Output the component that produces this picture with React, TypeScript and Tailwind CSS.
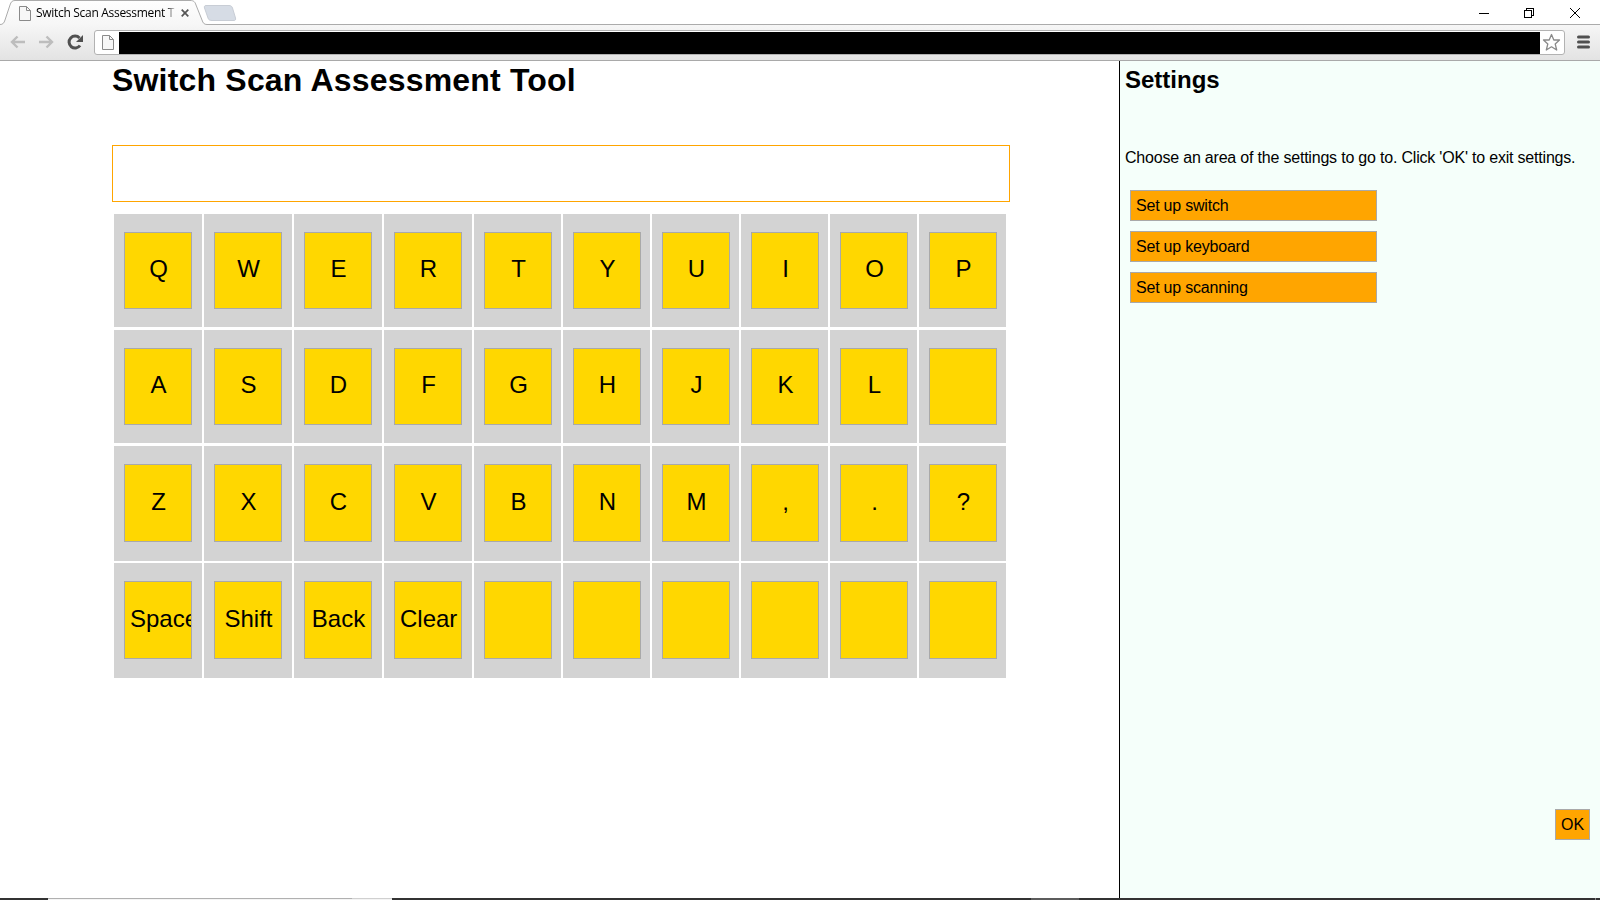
const rows = [
  ["Q", "W", "E", "R", "T", "Y", "U", "I", "O", "P"],
  ["A", "S", "D", "F", "G", "H", "J", "K", "L", ""],
  ["Z", "X", "C", "V", "B", "N", "M", ",", ".", "?"],
  ["Space", "Shift", "Back", "Clear", "", "", "", "", "", ""],
];
const rowStyles = ["h-[113px] mb-[3px]", "h-[113px] mb-[3px]", "h-[115px] mb-[2px]", "h-[115px]"];
const keyHeights = ["h-[77px]", "h-[77px]", "h-[78px]", "h-[78px]"];

function PageIcon() {
  return (
    <svg width="12" height="15" viewBox="0 0 12 15" fill="#f7f7f7" stroke="#8a8a8a">
      <path d="M.5 .5H7.5L11.5 4.5V14.5H.5Z" />
      <path d="M7.5 .5V4.5H11.5" fill="none" />
    </svg>
  );
}

function Browser() {
  return (
    <header className="h-[61px] shrink-0 border-b border-[#a9a9a9] bg-white">
      <div className="relative h-6">
        <svg className="absolute left-0 top-0" width="1600" height="26" fill="none">
          <defs>
            <linearGradient id="tab" x1="0" y1="0" x2="0" y2="1">
              <stop offset="0" stopColor="#fefefe" />
              <stop offset="1" stopColor="#f6f6f6" />
            </linearGradient>
          </defs>
          <path d="M206 5.5H229C231 5.5 232 6.500 232.500 8L235.500 18C236 20 235 20.500 234 20.500H212C210 20.500 208.500 20 208 18L204.500 8C204 6.500 204.500 5.500 206 5.500Z" fill="#d6dce5" stroke="#c8cdd5" />
          <path d="M0 24.500C3 24.500 4 23 5 20L10 5C11 2 12 .5 15 .5H190C194 .5 195 2 196 5L202 20C203 23 204 24.500 207 24.500H1600V26H0Z" fill="url(#tab)" />
          <path d="M0 24.500C3 24.500 4 23 5 20L10 5C11 2 12 .5 15 .5H190C194 .5 195 2 196 5L202 20C203 23 204 24.500 207 24.500H1600" stroke="#ababab" />
        </svg>
        <div className="relative flex h-6 items-center pl-[19px]">
          <div className="pt-[2px]"><PageIcon /></div>
          <div className="ml-[5px] w-[142px] whitespace-nowrap bg-gradient-to-r from-black from-[91%] to-transparent to-[99%] bg-clip-text pt-[2px] font-['Open_Sans','Noto_Sans',sans-serif] text-[12px] leading-[20px] tracking-[-0.3px] text-transparent">
            Switch Scan Assessment T
          </div>
          <svg className="ml-[3px] mt-[2px]" width="8" height="8" stroke="#555" strokeWidth="1.700"><path d="M.7 .7L7.300 7.300M7.300 .7L.7 7.300" /></svg>
          <svg className="ml-auto mr-[12px] mt-[2px] overflow-visible" width="106" height="12" fill="none" stroke="#000" shapeRendering="crispEdges">
            <path d="M-3 6.500H7" />
            <path d="M42.500 3.500H49.500V10.500H42.500ZM44.500 3.500V1.500H51.500V8.500H49.500" />
            <path d="M88 1L98 11M98 1L88 11" shapeRendering="auto" />
          </svg>
        </div>
      </div>
      <div className="relative mt-px flex h-[35px] items-center bg-gradient-to-b from-[#f6f6f6] to-[#e3e3e3] pl-[10px]">
        <svg className="mb-px" width="74" height="18" fill="none" stroke="#bdbdbd" strokeWidth="2.400">
          <path d="M15 9H2M7.500 3.500L2 9L7.500 14.500" />
          <path d="M29 9H42M36.500 3.500L42 9L36.500 14.500" />
          <path d="M70 12.500A6 6 0 1 1 69.500 5" stroke="#505050" strokeWidth="3" />
          <path d="M73 2V9H66Z" fill="#505050" stroke="none" />
        </svg>
        <div className="ml-[10px] flex h-[25px] w-[1471px] items-center rounded-[3px] border border-[#b2b2b2] bg-white pl-[7px]">
          <PageIcon />
          <div className="ml-[5px] h-[22px] w-[1421px] bg-black" />
          <svg className="ml-[2px]" width="19" height="19" viewBox="0 0 19 19" fill="none" stroke="#8a8a8a" strokeWidth="1.300" strokeLinejoin="round">
            <path d="M9.500 1.500L11.800 7H17.500L13.200 11L14.700 17L9.500 13.800L4.300 17L5.800 11L1.500 7H7.200Z" />
          </svg>
        </div>
        <svg className="mb-px ml-[12px]" width="13" height="14" stroke="#505050" strokeWidth="3" strokeLinecap="round"><path d="M1.500 2H11.500M1.500 7H11.500M1.500 12H11.500" /></svg>
      </div>
    </header>
  );
}

export default function App() {
  return (
    <div className="flex h-[900px] w-[1600px] flex-col overflow-hidden bg-white font-['Liberation_Sans',Arial,sans-serif] text-black">
      <Browser />
      <div className="flex min-h-0 flex-1">
        <main className="w-[1119px] pl-[112px]">
          <h1 className="h-[84px] pt-px text-[32px] font-bold leading-[37px] tracking-[0.19px]">Switch Scan Assessment Tool</h1>
          <div className="h-[57px] w-[898px] border border-[#ffa500]" />
          <div className="pl-[2px] pt-[12px]">
            {rows.map((row, r) => (
              <div key={r} className={`flex gap-[2px] ${rowStyles[r]}`}>
                {row.map((label, c) => (
                  <div key={c} className={`h-full bg-[#d3d3d3] pl-[10px] pt-[18px] ${c < 4 ? "w-[88px]" : "w-[87px]"}`}>
                    <button className={`block w-[68px] overflow-hidden whitespace-nowrap border border-[#a9a9a9] bg-[#ffd700] pb-[4px] pl-[5px] pr-[4px] text-center text-[24px] leading-[71px] ${keyHeights[r]}`}>
                      {label}
                    </button>
                  </div>
                ))}
              </div>
            ))}
          </div>
        </main>
        <aside className="flex flex-1 flex-col border-l border-black bg-[#f5fffa] pl-[5px]">
          <h2 className="h-[87px] pt-[5px] text-[24px] font-bold leading-[28px]">Settings</h2>
          <p className="whitespace-nowrap text-[16px] leading-[20px] tracking-[-0.2px]">Choose an area of the settings to go to. Click 'OK' to exit settings.</p>
          <div className="flex flex-col gap-[10px] pl-[5px] pt-[22px]">
            {["Set up switch", "Set up keyboard", "Set up scanning"].map((s) => (
              <button key={s} className="h-[31px] w-[247px] border border-[#a9a9a9] bg-[#ffa500] pl-[5px] text-left text-[16px] leading-[29px] tracking-[-0.21px]">{s}</button>
            ))}
          </div>
          <button className="mb-[58px] mr-[10px] mt-auto h-[31px] w-[35px] self-end border border-[#a9a9a9] bg-[#ffa500] text-[16px] leading-[29px]">OK</button>
        </aside>
      </div>
      <footer className="flex h-[2px] shrink-0 bg-[#333]">
        <div className="ml-[48px] h-[2px] w-[304px] border-t border-[#b0b0b0] bg-[#f4f4f4]" />
        <div className="h-[2px] w-[40px] border-t border-[#d0d0d0] bg-[#f4f4f4]" />
        <div className="ml-[639px] h-[2px] w-[48px] bg-[#5c5c5c]" />
        <div className="ml-auto mr-1 h-[2px] w-px bg-[#888]" />
      </footer>
    </div>
  );
}
